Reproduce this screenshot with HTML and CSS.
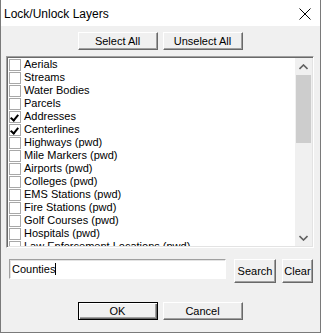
FILE: index.html
```html
<!DOCTYPE html>
<html lang="en">
<head>
    <meta charset="UTF-8">
    <title>Lock/Unlock Layers</title>
    <link rel="stylesheet" href="styles.css">
</head>
<body>
    <div class="window">
        <div class="titlebar">
            <span class="title">Lock/Unlock Layers</span>
            <svg class="close" width="12" height="12" viewBox="0 0 12 12">
                <path d="M0.5 0.5 L11.5 11.5 M11.5 0.5 L0.5 11.5" stroke="#000" stroke-width="1" fill="none"/>
            </svg>
        </div>
        <div class="content">
            <div class="top-buttons">
                <button class="btn wide">Select All</button>
                <button class="btn wide">Unselect All</button>
            </div>

            <div class="listbox">
                <ul class="layers">
                    <li><span class="check"></span>Aerials</li>
                    <li><span class="check"></span>Streams</li>
                    <li><span class="check"></span>Water Bodies</li>
                    <li><span class="check"></span>Parcels</li>
                    <li><span class="check on"></span>Addresses</li>
                    <li><span class="check on"></span>Centerlines</li>
                    <li><span class="check"></span>Highways (pwd)</li>
                    <li><span class="check"></span>Mile Markers (pwd)</li>
                    <li><span class="check"></span>Airports (pwd)</li>
                    <li><span class="check"></span>Colleges (pwd)</li>
                    <li><span class="check"></span>EMS Stations (pwd)</li>
                    <li><span class="check"></span>Fire Stations (pwd)</li>
                    <li><span class="check"></span>Golf Courses (pwd)</li>
                    <li><span class="check"></span>Hospitals (pwd)</li>
                    <li><span class="check"></span>Law Enforcement Locations (pwd)</li>
                </ul>
                <div class="scrollbar">
                    <div class="arrow">
                        <svg width="9" height="6" viewBox="0 0 9 6"><path d="M0.5 5 L4.5 1 L8.5 5" stroke="#606060" stroke-width="1.6" fill="none"/></svg>
                    </div>
                    <div class="thumb"></div>
                    <div class="track"></div>
                    <div class="arrow">
                        <svg width="9" height="6" viewBox="0 0 9 6"><path d="M0.5 1 L4.5 5 L8.5 1" stroke="#606060" stroke-width="1.6" fill="none"/></svg>
                    </div>
                </div>
            </div>

            <div class="search-row">
                <div class="search-input">Counties<span class="caret"></span></div>
                <button class="btn search">Search</button>
                <button class="btn clear">Clear</button>
            </div>

            <div class="bottom-buttons">
                <button class="btn wide default">OK</button>
                <button class="btn wide">Cancel</button>
            </div>
        </div>
    </div>
</body>
</html>
```

FILE: styles.css
```css
body {
    margin: 0;
    font-family: "Liberation Sans", Arial, sans-serif;
    font-size: 11px;
    background: #f0f0f0;
}
.window {
    width: 321px;
    height: 333px;
    box-sizing: border-box;
    border: 1px solid #7a7a7a;
    border-top: none;
    background: #f0f0f0;
}
.titlebar {
    height: 26px;
    background: #fff;
    display: flex;
    align-items: center;
    padding: 0 9px 0 3px;
}
.title {
    flex: 1;
    font-size: 12px;
    color: #000;
    padding-top: 1px;
}
.close {
    margin-top: 2px;
}
.content {
    padding: 0 6px 0 5px;
}
.top-buttons, .bottom-buttons {
    display: flex;
    justify-content: center;
    gap: 5px;
}
.top-buttons {
    margin-top: 6px;
}
.btn {
    font-family: "Liberation Sans", Arial, sans-serif;
    font-size: 11px;
    color: #000;
    background: #f0f0f0;
    box-sizing: border-box;
    border: 1px solid;
    border-color: #fff #696969 #696969 #fff;
    box-shadow: inset -1px -1px #a0a0a0;
    padding: 0;
    margin: 0;
}
.btn.wide {
    width: 80px;
    height: 18px;
}
.btn.default {
    border-color: #000;
    box-shadow: inset 1px 1px #fff, inset -1px -1px #696969, inset -2px -2px #a0a0a0;
}
.listbox {
    margin-top: 6px;
    height: 192px;
    box-sizing: border-box;
    border: 1px solid;
    border-color: #a0a0a0 #fff #fff #a0a0a0;
    box-shadow: inset 1px 1px #696969, inset -1px -1px #e3e3e3;
    background: #fff;
    display: flex;
    padding: 1px;
    overflow: hidden;
}
.layers {
    list-style: none;
    margin: 0;
    padding: 0 0 0 1px;
    flex: 1;
    overflow: hidden;
}
.layers li {
    height: 13px;
    line-height: 13px;
    display: flex;
    align-items: center;
    white-space: nowrap;
}
.check {
    width: 12px;
    height: 12px;
    box-sizing: border-box;
    border: 1px solid #a8a8a8;
    background: #fff;
    margin-right: 3px;
    position: relative;
}
.check.on::after {
    content: "";
    position: absolute;
    left: 2px;
    top: 1px;
    width: 3px;
    height: 6px;
    border: solid #000;
    border-width: 0 2px 2px 0;
    transform: rotate(40deg);
    transform-origin: 50% 50%;
}
.scrollbar {
    width: 17px;
    background: #f0f0f0;
    display: flex;
    flex-direction: column;
}
.arrow {
    height: 17px;
    display: flex;
    align-items: center;
    justify-content: center;
}
.thumb {
    height: 68px;
    margin: 0 1px;
    background: #cdcdcd;
}
.track {
    flex: 1;
}
.search-row {
    display: flex;
    align-items: flex-start;
    margin-top: 11px;
    padding-left: 3px;
}
.search-input {
    width: 217px;
    height: 20px;
    box-sizing: border-box;
    border: 1px solid;
    border-color: #a0a0a0 #fff #fff #a0a0a0;
    box-shadow: inset 1px 1px #e3e3e3;
    background: #fff;
    padding: 0 0 0 2px;
    line-height: 18px;
    display: flex;
    align-items: center;
}
.caret {
    width: 1px;
    height: 12px;
    background: #000;
}
.btn.search {
    width: 42px;
    height: 24px;
    margin-left: 8px;
}
.btn.clear {
    width: 31px;
    height: 24px;
    margin-left: 6px;
}
.bottom-buttons {
    margin-top: 19px;
}
```
